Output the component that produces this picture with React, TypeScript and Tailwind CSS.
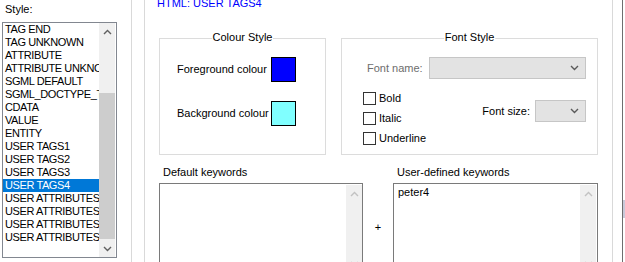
const styles = [
  'TAG END',
  'TAG UNKNOWN',
  'ATTRIBUTE',
  'ATTRIBUTE UNKNOWN',
  'SGML DEFAULT',
  'SGML_DOCTYPE_TEXT',
  'CDATA',
  'VALUE',
  'ENTITY',
  'USER TAGS1',
  'USER TAGS2',
  'USER TAGS3',
  'USER TAGS4',
  'USER ATTRIBUTES1',
  'USER ATTRIBUTES2',
  'USER ATTRIBUTES3',
  'USER ATTRIBUTES4',
];

function Chevron({ up = false, color }: { up?: boolean; color: string }) {
  return (
    <svg width="9" height="6" viewBox="0 0 9 6">
      <path
        d={up ? 'M1 5L4.5 1.5L8 5' : 'M1 1L4.5 4.5L8 1'}
        fill="none"
        stroke={color}
        strokeWidth="1.4"
      />
    </svg>
  );
}

function ScrollBar({ disabled = false }: { disabled?: boolean }) {
  const arrow = disabled ? '#c2c2c2' : '#606060';
  return (
    <div className="flex w-[16px] shrink-0 flex-col bg-[#f0f0f0]">
      <div className="flex h-[17px] items-center justify-center">
        <Chevron up color={arrow} />
      </div>
      {disabled ? (
        <div className="flex-1" />
      ) : (
        <>
          <div className="h-[53px]" />
          <div className="h-[146px] bg-[#cdcdcd]" />
          <div className="flex-1" />
        </>
      )}
      <div className="flex h-[17px] items-center justify-center">
        <Chevron color={arrow} />
      </div>
    </div>
  );
}

function GroupBox({ title, width, children }: { title: string; width: string; children: React.ReactNode }) {
  return (
    <div className={`relative h-[117px] shrink-0 border border-[#dcdcdc] ${width}`}>
      <span className="absolute left-1/2 top-[-8px] -translate-x-1/2 bg-white px-[1px] whitespace-nowrap">
        {title}
      </span>
      {children}
    </div>
  );
}

function Combo({ width }: { width: string }) {
  return (
    <div className={`flex h-[22px] items-center justify-end border border-[#c6c6c6] bg-[#e3e3e3] pr-[6px] ${width}`}>
      <Chevron color="#5a5a5a" />
    </div>
  );
}

function CheckBox({ label }: { label: string }) {
  return (
    <div className="flex h-[13px] items-center gap-[3px]">
      <div className="h-[13px] w-[13px] border border-[#333333] bg-white" />
      <span>{label}</span>
    </div>
  );
}

export default function App() {
  return (
    <div className="flex h-[262px] w-[625px] overflow-hidden bg-white font-['Liberation_Sans',Arial,sans-serif] text-[11px] leading-[13px] text-black">
      {/* style list */}
      <div className="w-[132px] shrink-0 border-r border-[#d9d9d9] pl-[2px] pt-[3px]">
        <div className="pl-[3px]">Style:</div>
        <div className="mt-[6px] flex h-[236px] w-[115px] border border-[#828790] bg-white pr-[1px]">
          <div className="w-[96px] overflow-hidden">
            {styles.map((s) => (
              <div
                key={s}
                className={`h-[13px] overflow-hidden whitespace-nowrap px-[2px] tracking-[-0.4px] ${
                  s === 'USER TAGS4' ? 'bg-[#0078d7] text-white' : ''
                }`}
              >
                {s}
              </div>
            ))}
          </div>
          <ScrollBar />
        </div>
      </div>

      <div className="w-[13px] shrink-0 border-r border-[#d9d9d9]" />

      {/* style settings */}
      <div className="w-[468px] shrink-0 border-r border-[#d9d9d9]">
        <div className="mt-[-3px] pl-[12px] text-[#0000ff]">HTML: USER TAGS4</div>

        <div className="mt-[28px] flex gap-[15px] pl-[14px]">
          <GroupBox title="Colour Style" width="w-[167px]">
            <div className="pl-[17px] pt-[18px]">
              <div className="flex items-center">
                <span className="w-[94px]">Foreground colour</span>
                <div className="h-[25px] w-[25px] border border-black bg-[#0000ff]" />
              </div>
              <div className="mt-[19px] flex items-center">
                <span className="w-[94px]">Background colour</span>
                <div className="h-[25px] w-[25px] border border-black bg-[#80ffff]" />
              </div>
            </div>
          </GroupBox>

          <GroupBox title="Font Style" width="w-[257px]">
            <div className="pt-[18px]">
              <div className="flex items-center pl-[25px]">
                <span className="w-[62px] text-[#6d6d6d]">Font name:</span>
                <Combo width="w-[157px]" />
              </div>
              <div className="mt-[13px] flex justify-between pr-[11px]">
                <div className="flex flex-col gap-[7px] pl-[21px]">
                  <CheckBox label="Bold" />
                  <CheckBox label="Italic" />
                  <CheckBox label="Underline" />
                </div>
                <div className="mt-[8px] flex items-center gap-[5px] self-start">
                  <span>Font size:</span>
                  <Combo width="w-[51px]" />
                </div>
              </div>
            </div>
          </GroupBox>
        </div>

        <div className="mt-[11px] flex pl-[14px]">
          <div className="w-[204px] shrink-0">
            <div className="pl-[4px]">Default keywords</div>
            <div className="mt-[4px] flex h-[90px] border border-[#7a7a7a] pt-[1px]">
              <div className="flex-1" />
              <ScrollBar disabled />
            </div>
          </div>
          <div className="w-[30px] shrink-0 pt-[55px] text-center">+</div>
          <div className="w-[205px] shrink-0">
            <div className="pl-[4px]">User-defined keywords</div>
            <div className="mt-[4px] flex h-[90px] border border-[#7a7a7a] pr-[1px] pt-[1px]">
              <div className="flex-1 pl-[4px] pt-[1px]">peter4</div>
              <ScrollBar disabled />
            </div>
          </div>
        </div>
      </div>

      <div className="w-[10px] shrink-0 border-r border-[#6e6e6e]" />
      <div className="w-[2px] shrink-0 pt-[200px]">
        <div className="h-[18px] bg-[#c9c9d9]" />
      </div>
    </div>
  );
}
